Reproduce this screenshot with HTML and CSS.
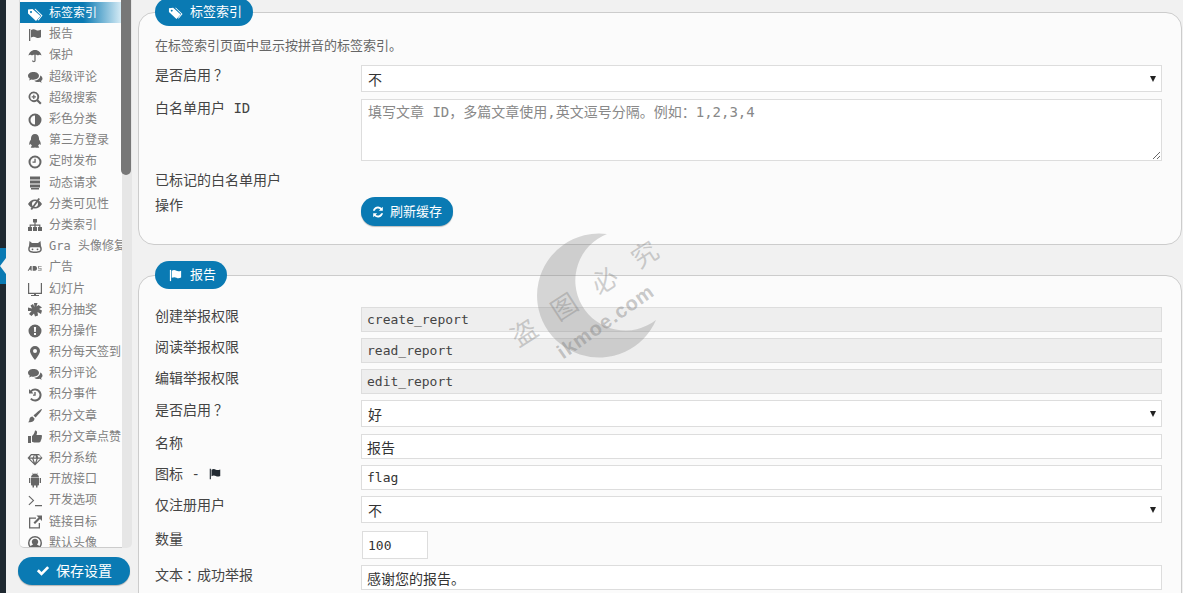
FILE: index.html
```html
<!DOCTYPE html>
<html lang="zh-CN">
<head>
<meta charset="utf-8">
<title>标签索引</title>
<link rel="stylesheet" href="styles.css">
</head>
<body>
<svg class="defs" width="0" height="0" aria-hidden="true">
  <symbol id="i-tags" viewBox="0 0 16 16"><path d="M1 3.500 5.500 3l8 7-4.500 5-8-7.500zM4 5a1 1 0 1 0 .01 0z" fill-rule="evenodd"/><path d="M7.500 3l1-.2 7 6.700-4 5-1-.5 3.700-4.300z"/></symbol>
  <symbol id="i-flag" viewBox="0 0 16 16"><path d="M2 2h1.300v12H2z"/><path d="M4 3c2-1.200 3.500-.8 5 0s3 .6 5-.2v7.400c-2 1-3.500 1-5 .2s-3-1-5 .1z"/></symbol>
  <symbol id="i-umbrella" viewBox="0 0 16 16"><path d="M8 2C4.500 2 2 4.500 1.500 7.500 2.800 6.500 4 6.500 5 7.500c.8-.8 1.700-1 2.400-.7v5.700c0 .9-1 .9-1.200 0H5c0 2.300 3.600 2.300 3.600 0V6.800c.7-.3 1.600-.1 2.400.7 1-1 2.200-1 3.500 0C14 4.500 11.500 2 8 2z"/></symbol>
  <symbol id="i-comments" viewBox="0 0 16 16"><path d="M6.500 3C3.500 3 1 4.600 1 6.800c0 1.200.7 2.200 1.800 2.900L2 11.500l2.400-1.100c.7.200 1.400.3 2.100.3 3 0 5.500-1.700 5.500-3.900S9.500 3 6.500 3z"/><path d="M13.200 6.500c.2 2.700-2.500 5-6 5.200 1 .9 2.300 1.300 3.800 1.300.5 0 1-.1 1.500-.2l2.200 1-.7-1.700c.9-.6 1.500-1.500 1.500-2.500 0-1.300-.9-2.400-2.300-3.100z"/></symbol>
  <symbol id="i-search" viewBox="0 0 16 16"><path fill-rule="evenodd" d="M6.800 1.500a5.300 5.300 0 1 0 3 9.700l3.300 3.300 1.500-1.500-3.300-3.300a5.300 5.300 0 0 0-4.500-8.200zm0 1.800a3.500 3.500 0 1 1 0 7 3.500 3.500 0 0 1 0-7z"/><path d="M6.200 4.700h1.200v1.500h1.500v1.200H7.400v1.500H6.200V7.400H4.700V6.200h1.500z"/></symbol>
  <symbol id="i-adjust" viewBox="0 0 16 16"><path fill-rule="evenodd" d="M8 1.500a6.500 6.500 0 1 0 0 13 6.500 6.500 0 0 0 0-13zm0 2v9a4.500 4.500 0 0 1 0-9z"/></symbol>
  <symbol id="i-qq" viewBox="0 0 16 16"><path d="M8 1C5.500 1 4 3 4 5.300v1.200C2.800 8 2 10 2.300 11.800c.6.300 1.200-.6 1.500-1.100.2.900.7 1.700 1.300 2.200-.8.300-1.400.8-1.300 1.300.2.700 2.300.8 4.200.3 1.900.5 4 .4 4.200-.3.100-.5-.5-1-1.300-1.300.6-.5 1.100-1.300 1.300-2.200.3.500.9 1.400 1.500 1.100C14 10 13.200 8 12 6.500V5.300C12 3 10.500 1 8 1z"/></symbol>
  <symbol id="i-clock" viewBox="0 0 16 16"><path fill-rule="evenodd" d="M8 1.500a6.500 6.500 0 1 0 0 13 6.500 6.500 0 0 0 0-13zm0 2a4.500 4.500 0 1 1 0 9 4.500 4.500 0 0 1 0-9z"/><path d="M7.400 4.800h1.300v3.900H5.500V7.500h1.900z"/></symbol>
  <symbol id="i-db" viewBox="0 0 16 16"><path d="M3 1.500h10v3H3zM3 5.500h10v3H3zM3 9.500h10v3H3z"/><path d="M4 13h8v1.500H4z"/></symbol>
  <symbol id="i-eye" viewBox="0 0 16 16"><path fill-rule="evenodd" d="M8 3.500C5 3.500 2.500 5.500 1 8c1.500 2.500 4 4.500 7 4.500S13.500 10.500 15 8c-1.500-2.500-4-4.500-7-4.500zm0 1.500a3 3 0 1 1 0 6 3 3 0 0 1 0-6z"/><path d="M11.500 2 13 3 5 14l-1.500-1z"/></symbol>
  <symbol id="i-sitemap" viewBox="0 0 16 16"><path d="M6 2h4v3.500H8.600V7.500h4.800V10H15v4h-4v-4h1.200V8.700H8.600V10H10v4H6v-4h1.400V8.700H3.800V10H5v4H1v-4h1.600V7.500h4.800V5.500H6z"/></symbol>
  <symbol id="i-cat" viewBox="0 0 16 16"><path fill-rule="evenodd" d="M2.500 2 5 4h6l2.500-2 .5 5c.6 1 .8 2 .8 3 0 3-2.500 4-6.800 4S1.200 13 1.200 10c0-1 .2-2 .8-3zm1.300 6.200c-.8 0-1.100.8-1.100 2s.5 2.200 5.300 2.200 5.300-1 5.300-2.200-.3-2-1.100-2H3.800z"/><circle cx="5.500" cy="10.300" r=".9"/><circle cx="10.500" cy="10.300" r=".9"/></symbol>
  <symbol id="i-ads" viewBox="0 0 24 16"><path d="M1 12 5 5h2v7H5.500v-1.500H3.500L2.800 12zM8.500 5H12c2 0 3 1.500 3 3.500S14 12 12 12H8.500z"/><path d="M16.500 5H22v1.200h-4v1.700h3.800V12h-5.300v-1.200h4V9h-4z" opacity=".7"/></symbol>
  <symbol id="i-tv" viewBox="0 0 16 16"><path d="M1 2h1.200v9.800h11.600V2H15v11H9v1h3v1H4v-1h3v-1H1z"/></symbol>
  <symbol id="i-pin" viewBox="0 0 16 16"><path d="M7 1h3.500L9.500 4.500l2-1.500L15 5.500 12 7l3 1.500-1 3.500-3.500-2 .5 3.500-3 1L7 11.500 4.500 14 2 12l2.500-3L1 9V5.500l4 1L3.500 3.500 6 2l1.500 3z"/></symbol>
  <symbol id="i-excl" viewBox="0 0 16 16"><path fill-rule="evenodd" d="M8 1.500a6.500 6.500 0 1 0 0 13 6.500 6.500 0 0 0 0-13zM6.900 4h2.200l-.3 5H7.200zM7 10h2v2H7z"/></symbol>
  <symbol id="i-marker" viewBox="0 0 16 16"><path fill-rule="evenodd" d="M8 1a5 5 0 0 0-5 5c0 2.500 3 6.500 5 9 2-2.500 5-6.500 5-9a5 5 0 0 0-5-5zm0 3a2 2 0 1 1 0 4 2 2 0 0 1 0-4z"/></symbol>
  <symbol id="i-history" viewBox="0 0 16 16"><path d="M8 1.500A6.500 6.500 0 0 0 3.400 3.400L2 2v4.500h4.500L4.800 4.800A4.500 4.500 0 1 1 8 12.500a4.400 4.400 0 0 1-3.400-1.600l-1.500 1.300A6.500 6.500 0 1 0 8 1.500z"/><path d="M7.300 5h1.400v3.700H6V7.500h1.300z"/></symbol>
  <symbol id="i-brush" viewBox="0 0 16 16"><path d="M15 1c.5.500-3 5-6.500 8.500L6.500 7.500C10 4 14.500.5 15 1zM5.500 8.500l2 2c0 2.500-2 4-6.500 3.800 1.500-1 1.200-2 1.500-3.300.3-1.300 1.500-2.500 3-2.500z"/></symbol>
  <symbol id="i-thumb" viewBox="0 0 16 16"><path d="M1 7h3v7H1zM5 7c1.500-1 2.500-3 3-5.500 1.500-.3 2.300 1 2 2.500l-.5 2H14c1.200 0 1.400 1.500.6 2 .5.800.2 1.600-.4 2 .3.800 0 1.500-.6 1.800.1 1-.5 1.700-1.600 1.700H8c-1.300 0-2-.5-3-.8z"/></symbol>
  <symbol id="i-gem" viewBox="0 0 16 16"><path fill-rule="evenodd" d="M4 3h8l3.500 4L8 14.500.5 7zm.6 1.200L2.800 6.500h3L6.800 4.200zm3.200 0L6.900 6.500h2.200L8.200 4.200zm2.500 0 1 2.300h2.900l-1.800-2.300zM2.800 7.700l3.700 3.700-1.300-3.700zm3.700 0L8 12l1.500-4.300zm4.300 0-1.300 3.700 3.700-3.700z"/></symbol>
  <symbol id="i-android" viewBox="0 0 16 16"><path d="M4 5.500C4 3.800 5.500 2.300 6 2.200L5.400 1l.4-.3.700 1.200a4 4 0 0 1 3 0l.7-1.200.4.300L10 2.200c.5.100 2 1.600 2 3.300zM4 6h8v6.500c0 .5-.4 1-1 1h-.5V15.500H9v-2H7v2H5.500v-2H5c-.6 0-1-.5-1-1zM2 6h1.300v5H2zM12.700 6H14v5h-1.300z"/></symbol>
  <symbol id="i-term" viewBox="0 0 16 16"><path d="M1.500 3.500 2.300 2.700 7.300 7.500l-5 4.800-.8-.8L5.700 7.500zM8 12h7v1.200H8z"/></symbol>
  <symbol id="i-ext" viewBox="0 0 16 16"><path d="M2 3.500h7v1.300H3.300v8.400h8.400V9H13v5.500H2z"/><path d="M9.500 1.500H15V7l-2-2-5 5-1.500-1.500 5-5z"/></symbol>
  <symbol id="i-user" viewBox="0 0 16 16"><path fill-rule="evenodd" d="M8 1a7 7 0 1 0 0 14A7 7 0 0 0 8 1zm0 1.600a5.400 5.400 0 0 1 4.300 8.700c-.7-1-1.700-1.600-2.500-1.800a3.200 3.200 0 1 0-3.600 0c-.8.200-1.800.8-2.500 1.800A5.400 5.400 0 0 1 8 2.600z"/></symbol>
  <symbol id="i-check" viewBox="0 0 16 16"><path d="M6.300 13.500 1 8.200l2.200-2.200 3.100 3.100L12.800 2.500 15 4.700z"/></symbol>
  <symbol id="i-refresh" viewBox="0 0 16 16"><path d="M13.500 2v4.500H9l1.600-1.600A4 4 0 0 0 4.300 6.500H2.200A6 6 0 0 1 12.100 3.400zM2.500 14V9.500H7l-1.600 1.600a4 4 0 0 0 6.300-1.600h2.100A6 6 0 0 1 3.900 12.600z"/></symbol>
</svg>

<div class="layout">
  <div class="rail"><span class="rail-current"></span></div>

  <aside class="side">
    <div class="nav-wrap">
      <nav class="nav">
        <a class="nav-item active"><svg class="ico"><use href="#i-tags"/></svg><span>标签索引</span></a>
        <a class="nav-item"><svg class="ico"><use href="#i-flag"/></svg><span>报告</span></a>
        <a class="nav-item"><svg class="ico"><use href="#i-umbrella"/></svg><span>保护</span></a>
        <a class="nav-item"><svg class="ico"><use href="#i-comments"/></svg><span>超级评论</span></a>
        <a class="nav-item"><svg class="ico"><use href="#i-search"/></svg><span>超级搜索</span></a>
        <a class="nav-item"><svg class="ico"><use href="#i-adjust"/></svg><span>彩色分类</span></a>
        <a class="nav-item"><svg class="ico"><use href="#i-qq"/></svg><span>第三方登录</span></a>
        <a class="nav-item"><svg class="ico"><use href="#i-clock"/></svg><span>定时发布</span></a>
        <a class="nav-item"><svg class="ico"><use href="#i-db"/></svg><span>动态请求</span></a>
        <a class="nav-item"><svg class="ico"><use href="#i-eye"/></svg><span>分类可见性</span></a>
        <a class="nav-item"><svg class="ico"><use href="#i-sitemap"/></svg><span>分类索引</span></a>
        <a class="nav-item"><svg class="ico"><use href="#i-cat"/></svg><span>Gra 头像修复</span></a>
        <a class="nav-item"><svg class="ico"><use href="#i-ads"/></svg><span>广告</span></a>
        <a class="nav-item"><svg class="ico"><use href="#i-tv"/></svg><span>幻灯片</span></a>
        <a class="nav-item"><svg class="ico"><use href="#i-pin"/></svg><span>积分抽奖</span></a>
        <a class="nav-item"><svg class="ico"><use href="#i-excl"/></svg><span>积分操作</span></a>
        <a class="nav-item"><svg class="ico"><use href="#i-marker"/></svg><span>积分每天签到</span></a>
        <a class="nav-item"><svg class="ico"><use href="#i-comments"/></svg><span>积分评论</span></a>
        <a class="nav-item"><svg class="ico"><use href="#i-history"/></svg><span>积分事件</span></a>
        <a class="nav-item"><svg class="ico"><use href="#i-brush"/></svg><span>积分文章</span></a>
        <a class="nav-item"><svg class="ico"><use href="#i-thumb"/></svg><span>积分文章点赞</span></a>
        <a class="nav-item"><svg class="ico"><use href="#i-gem"/></svg><span>积分系统</span></a>
        <a class="nav-item"><svg class="ico"><use href="#i-android"/></svg><span>开放接口</span></a>
        <a class="nav-item"><svg class="ico"><use href="#i-term"/></svg><span>开发选项</span></a>
        <a class="nav-item"><svg class="ico"><use href="#i-ext"/></svg><span>链接目标</span></a>
        <a class="nav-item"><svg class="ico"><use href="#i-user"/></svg><span>默认头像</span></a>
      </nav>
      <div class="scrolltrack"><div class="scrollthumb"></div></div>
    </div>
    <button class="pill save"><svg class="ico"><use href="#i-check"/></svg>保存设置</button>
  </aside>

  <main class="main">
    <section class="panel">
      <h2 class="pill badge"><svg class="ico"><use href="#i-tags"/></svg>标签索引</h2>
      <div class="card">
        <p class="desc">在标签索引页面中显示按拼音的标签索引。</p>
        <div class="row row-sel">
          <label class="lbl">是否启用<span class="punct">？</span></label>
          <div class="select"><select><option>不</option></select></div>
        </div>
        <div class="row row-area">
          <label class="lbl">白名单用户 ID</label>
          <textarea class="area" placeholder="填写文章 ID，多篇文章使用,英文逗号分隔。例如：1,2,3,4"></textarea>
        </div>
        <div class="row row-plain">
          <label class="lbl">已标记的白名单用户</label>
        </div>
        <div class="row row-last">
          <label class="lbl">操作</label>
          <div><button class="pill refresh"><svg class="ico"><use href="#i-refresh"/></svg>刷新缓存</button></div>
        </div>
      </div>
    </section>

    <section class="panel">
      <h2 class="pill badge"><svg class="ico"><use href="#i-flag"/></svg>报告</h2>
      <div class="card card-open">
        <div class="row"><label class="lbl">创建举报权限</label><input class="field ro" value="create_report" readonly></div>
        <div class="row"><label class="lbl">阅读举报权限</label><input class="field ro" value="read_report" readonly></div>
        <div class="row"><label class="lbl">编辑举报权限</label><input class="field ro" value="edit_report" readonly></div>
        <div class="row row-sel"><label class="lbl">是否启用<span class="punct">？</span></label><div class="select"><select><option>好</option></select></div></div>
        <div class="row"><label class="lbl">名称</label><input class="field field-cn" value="报告"></div>
        <div class="row"><label class="lbl">图标 - <svg class="ico ico-inline"><use href="#i-flag"/></svg></label><input class="field" value="flag"></div>
        <div class="row row-sel"><label class="lbl">仅注册用户</label><div class="select"><select><option>不</option></select></div></div>
        <div class="row row-sel"><label class="lbl">数量</label><input class="field num" value="100"></div>
        <div class="row"><label class="lbl">文本<span class="punct">：</span>成功举报</label><input class="field field-cn" value="感谢您的报告。"></div>
      </div>
    </section>
  </main>
</div>

<svg class="watermark" viewBox="0 0 160 140" aria-hidden="true">
  <path class="moon" d="M80 4A62 62 0 1 0 129 90 50 50 0 1 1 80 4z"/>
  <text class="wm-cn" x="-26" y="94" textLength="170" transform="translate(-13 -30) rotate(-33 80 70)">盗图必究</text>
  <text class="wm-en" x="22" y="118" transform="translate(-24 -13) rotate(-35 80 70)">ikmoe.com</text>
</svg>
</body>
</html>
```
FILE: styles.css
```css
* { box-sizing: border-box; }
html, body { height: 100%; margin: 0; overflow: hidden; }
body {
  position: relative;
  background: #f1f1f1;
  color: #333;
  font: 14px/20px "DejaVu Sans Mono", "Noto Sans CJK SC", monospace;
}
.defs { position: absolute; }
.ico { width: 16px; height: 16px; fill: currentColor; flex: none; }
.punct { font-family: "Noto Sans CJK TC", sans-serif; padding-left: 3px; margin-right: -3px; }

.layout { display: flex; height: 593px; }
.rail { position: relative; width: 6px; flex: none; background: #1e2830; }
.rail-current { position: absolute; left: 0; top: 248px; width: 6px; height: 36px; background: #0a7ab3; }
.rail-current::after {
  content: ""; position: absolute; left: 0; top: 10px;
  border: 8px solid transparent; border-left-width: 0; border-right: 6px solid #f1f1f1;
}

.side { width: 132px; flex: none; padding-left: 13px; }
.nav-wrap { display: flex; height: 548px; width: 113px; }
.nav {
  width: 103px; height: 548px; padding-top: 2px; overflow: hidden;
  background: #fcfcfc; border-left: 1px solid #ddd; border-bottom: 1px solid #ccc;
  border-radius: 0 0 0 5px;
}
.nav-item {
  display: flex; align-items: center; gap: 6px; height: 21.2px; padding: 2px 0 0 7px;
  font-size: 12px; line-height: 19px; color: #666; white-space: nowrap;
}
.nav-item span { overflow: hidden; color: #808080; }
.nav-item.active { background: linear-gradient(to right, #0a7ab3 62%, #d9edf6); color: #fff; }
.nav-item.active span { color: #fff; }
.scrolltrack { width: 10px; height: 548px; background: #e6e6e6; border-radius: 0 0 5px 0; }
.scrollthumb { width: 10px; height: 175px; margin-left: -1px; background: #777; border-radius: 0 0 5px 5px; }

.pill {
  display: flex; align-items: center; border: 0; border-radius: 14px;
  background: #0a7ab3; color: #fff;
  box-shadow: 0 1px 1px rgba(0, 0, 0, .25);
  font: 14px/20px "DejaVu Sans Mono", "Noto Sans CJK SC", monospace;
}
.save { width: 112px; height: 28px; margin: 9px 0 0 -1px; padding-left: 18px; gap: 6px; }
.save .ico { width: 14px; height: 14px; }

.main { flex: 1; min-width: 0; padding-right: 1px; margin-top: -2px; overflow: hidden; }
.panel { margin-bottom: 16px; }
.badge {
  position: relative; z-index: 1; width: max-content; height: 28px; margin: 0 0 -14px 17px;
  padding: 0 11px 0 13px; gap: 7px; font-size: 13px; font-weight: 400; box-shadow: none;
}
.badge .ico { width: 15px; height: 15px; }
.card {
  height: 233px; padding: 23px 20px 0 16px;
  background: #fbfbfb; border: 1px solid #ccc; border-radius: 16px;
}
.card-open { height: 400px; padding-top: 31px; }
.desc { margin: 0 0 9px; font-size: 13px; line-height: 20px; color: #666; }

.row { display: grid; grid-template-columns: 206px 801px; margin-bottom: 6px; }
.row-sel { margin-bottom: 7px; }
.lbl { display: block; margin-top: -1px; line-height: 20px; color: #444; white-space: nowrap; }
.ico-inline { width: 14px; height: 14px; color: #222a32; vertical-align: -2px; }

.select { position: relative; }
.select select {
  display: block; width: 100%; height: 27px; padding: 2px 6px 0; appearance: none;
  background: #fff; border: 1px solid #ddd; border-radius: 0; color: #333;
  font: 14px/20px "DejaVu Sans Mono", "Noto Sans CJK SC", monospace;
}
.select::after {
  content: ""; position: absolute; right: 6px; top: 11px;
  border: 3.5px solid transparent; border-top: 6px solid #222; border-bottom: 0;
}
.area {
  display: block; width: 100%; height: 62px; padding: 2px 6px; background: #fff;
  border: 1px solid #ddd; border-radius: 0; color: #333;
  font: 14px/20px "DejaVu Sans Mono", "Noto Sans CJK TC", monospace;
}
.area::placeholder { color: #888; opacity: 1; }
.row-area { margin-bottom: 10px; }
.row-plain { height: 20px; margin-bottom: 5px; }
.row-last { margin-bottom: 0; }
.refresh { height: 29px; width: 92px; padding-left: 10px; gap: 5px; margin-top: 1px; font-size: 13px; }
.refresh .ico { width: 14px; height: 14px; }

.field {
  display: block; width: 100%; height: 25px; padding: 0 5px; background: #fff;
  border: 1px solid #ddd; border-radius: 0; color: #333;
  font: 13px/20px "DejaVu Sans Mono", "Noto Sans CJK SC", monospace;
}
.field-cn { font-size: 14px; }
.field.ro { background: #eee; color: #444; }
.num { width: 66px; height: 28px; margin: 1px 0 -1px 1px; }

.watermark { position: absolute; left: 527px; top: 230px; width: 160px; height: 140px; pointer-events: none; overflow: visible; }
.moon { fill: rgba(125, 125, 125, .3); }
.wm-cn { font: 26px "Noto Sans CJK SC", sans-serif; fill: rgba(120, 120, 120, .35); }
.wm-en { font: 700 20px "Liberation Sans", sans-serif; letter-spacing: 1px; fill: rgba(120, 120, 120, .4); }
```
